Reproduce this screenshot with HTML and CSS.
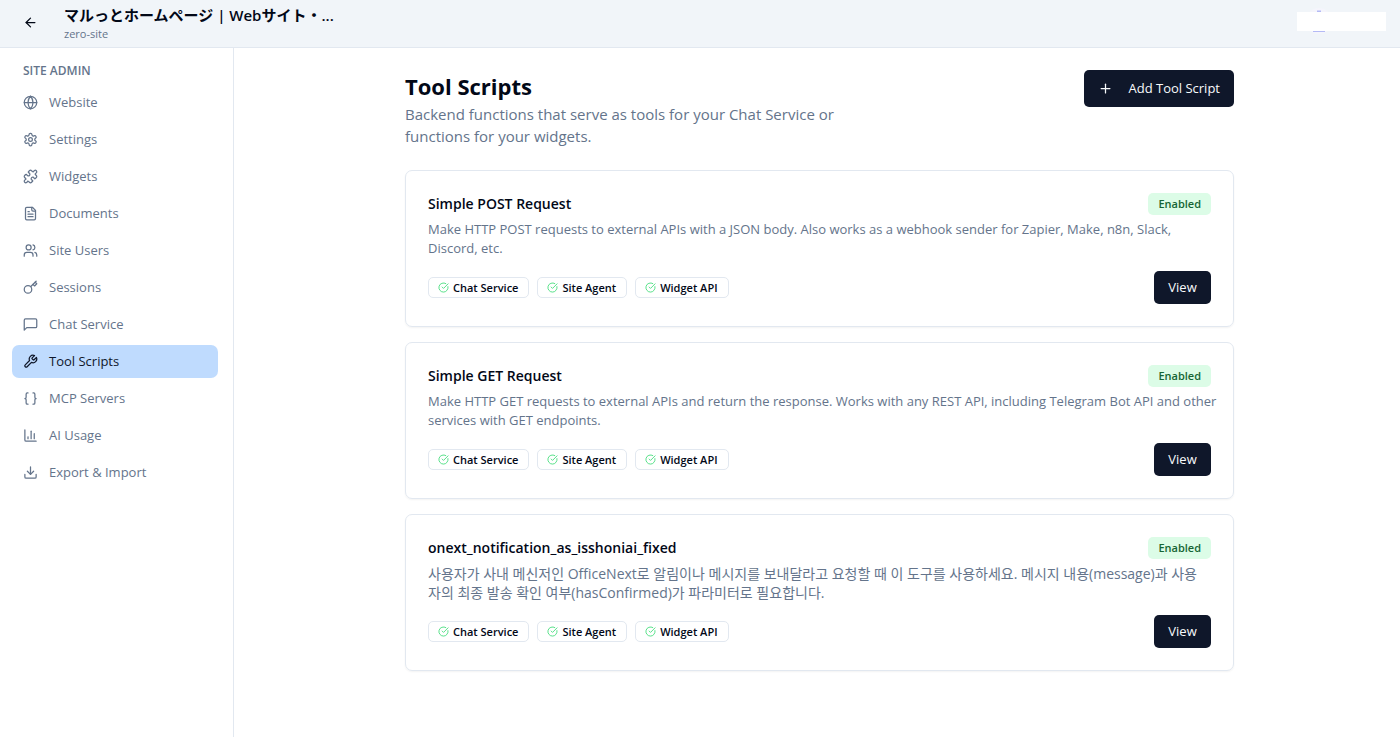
FILE: index.html
```
<!DOCTYPE html>
<html lang="en">
<head>
    <meta charset="UTF-8">
    <meta name="viewport" content="width=device-width, initial-scale=1.0">
    <title>Tool Scripts</title>
    <link rel="stylesheet" href="styles.css">
</head>
<body>
    <!-- Shared icon shapes -->
    <svg class="sprite" aria-hidden="true">
        <symbol id="icon-check" viewBox="0 0 24 24">
            <path d="M21.801 10A10 10 0 1 1 17 3.335"/>
            <path d="m9 11 3 3L22 4"/>
        </symbol>
    </svg>

    <header class="topbar">
        <button type="button" class="back-button" aria-label="Back">
            <svg class="icon" viewBox="0 0 24 24"><path d="m12 19-7-7 7-7"/><path d="M19 12H5"/></svg>
        </button>
        <div class="site-info">
            <p class="site-title" lang="ja">マルっとホームページ | Webサイト・...</p>
            <p class="site-slug">zero-site</p>
        </div>
        <div class="account">
            <svg class="avatar" viewBox="0 0 22 30" aria-hidden="true">
                <circle cx="11" cy="15" r="13" fill="#f5f5fc"/>
                <path d="M9 5.500h4M5 25h12" stroke="#b4baf5" stroke-width="2"/>
            </svg>
            <span class="account-name"></span>
        </div>
    </header>

    <div class="layout">
        <aside class="sidebar">
            <h2 class="sidebar-title">SITE ADMIN</h2>
            <nav class="nav">
                <a href="#" class="nav-item">
                    <svg class="icon" viewBox="0 0 24 24"><circle cx="12" cy="12" r="10"/><path d="M12 2a14.5 14.5 0 0 0 0 20 14.5 14.5 0 0 0 0-20"/><path d="M2 12h20"/></svg>
                    <span>Website</span>
                </a>
                <a href="#" class="nav-item">
                    <svg class="icon" viewBox="0 0 24 24"><path d="M12.220 2h-.44a2 2 0 0 0-2 2v.18a2 2 0 0 1-1 1.730l-.43.25a2 2 0 0 1-2 0l-.15-.08a2 2 0 0 0-2.730.73l-.22.38a2 2 0 0 0 .73 2.730l.15.1a2 2 0 0 1 1 1.720v.51a2 2 0 0 1-1 1.740l-.15.09a2 2 0 0 0-.73 2.730l.22.38a2 2 0 0 0 2.730.73l.15-.08a2 2 0 0 1 2 0l.43.25a2 2 0 0 1 1 1.730V20a2 2 0 0 0 2 2h.44a2 2 0 0 0 2-2v-.18a2 2 0 0 1 1-1.730l.43-.25a2 2 0 0 1 2 0l.15.08a2 2 0 0 0 2.730-.73l.22-.39a2 2 0 0 0-.73-2.730l-.15-.08a2 2 0 0 1-1-1.740v-.5a2 2 0 0 1 1-1.740l.15-.09a2 2 0 0 0 .73-2.730l-.22-.38a2 2 0 0 0-2.730-.73l-.15.08a2 2 0 0 1-2 0l-.43-.25a2 2 0 0 1-1-1.730V4a2 2 0 0 0-2-2z"/><circle cx="12" cy="12" r="3"/></svg>
                    <span>Settings</span>
                </a>
                <a href="#" class="nav-item">
                    <svg class="icon" viewBox="0 0 24 24"><path d="M19.439 7.850c-.049.322.059.648.289.878l1.568 1.568c.47.470.706 1.087.706 1.704s-.235 1.233-.706 1.704l-1.611 1.611a.98.98 0 0 1-.837.276c-.470-.070-.802-.480-.968-.925a2.501 2.501 0 1 0-3.214 3.214c.446.166.855.497.925.968a.979.979 0 0 1-.276.837l-1.610 1.610a2.404 2.404 0 0 1-1.705.707 2.402 2.402 0 0 1-1.704-.706l-1.568-1.568a1.026 1.026 0 0 0-.877-.290c-.493.074-.840.504-1.020.968a2.500 2.500 0 1 1-3.237-3.237c.464-.180.894-.527.967-1.020a1.026 1.026 0 0 0-.289-.877l-1.568-1.568A2.402 2.402 0 0 1 1.998 12c0-.617.236-1.234.706-1.704L4.230 8.770c.240-.240.581-.353.917-.303.515.077.877.528 1.073 1.010a2.500 2.500 0 1 0 3.259-3.259c-.482-.196-.933-.558-1.010-1.073-.050-.336.062-.676.303-.917l1.525-1.525A2.402 2.402 0 0 1 12 1.998c.617 0 1.234.236 1.704.706l1.568 1.568c.230.230.556.338.877.290.493-.074.840-.504 1.020-.968a2.500 2.500 0 1 1 3.237 3.237c-.464.180-.894.527-.967 1.020Z"/></svg>
                    <span>Widgets</span>
                </a>
                <a href="#" class="nav-item">
                    <svg class="icon" viewBox="0 0 24 24"><path d="M15 2H6a2 2 0 0 0-2 2v16a2 2 0 0 0 2 2h12a2 2 0 0 0 2-2V7Z"/><path d="M14 2v4a2 2 0 0 0 2 2h4"/><path d="M10 9H8"/><path d="M16 13H8"/><path d="M16 17H8"/></svg>
                    <span>Documents</span>
                </a>
                <a href="#" class="nav-item">
                    <svg class="icon" viewBox="0 0 24 24"><path d="M16 21v-2a4 4 0 0 0-4-4H6a4 4 0 0 0-4 4v2"/><circle cx="9" cy="7" r="4"/><path d="M22 21v-2a4 4 0 0 0-3-3.870"/><path d="M16 3.130a4 4 0 0 1 0 7.750"/></svg>
                    <span>Site Users</span>
                </a>
                <a href="#" class="nav-item">
                    <svg class="icon" viewBox="0 0 24 24"><circle cx="8" cy="15" r="6"/><path d="m12.500 10.500 8.500-8.500"/><path d="m16 7 2.500 2.500 3.500-3.500-2.500-2.500"/></svg>
                    <span>Sessions</span>
                </a>
                <a href="#" class="nav-item">
                    <svg class="icon" viewBox="0 0 24 24"><path d="M22 15a2 2 0 0 1-2 2H6l-4 4V5a2 2 0 0 1 2-2h16a2 2 0 0 1 2 2z"/></svg>
                    <span>Chat Service</span>
                </a>
                <a href="#" class="nav-item active" aria-current="page">
                    <svg class="icon" viewBox="0 0 24 24"><path d="M14.700 6.300a1 1 0 0 0 0 1.400l1.600 1.600a1 1 0 0 0 1.400 0l3.770-3.770a6 6 0 0 1-7.940 7.940l-6.910 6.910a2.120 2.120 0 0 1-3-3l6.910-6.910a6 6 0 0 1 7.940-7.940l-3.760 3.760z"/></svg>
                    <span>Tool Scripts</span>
                </a>
                <a href="#" class="nav-item">
                    <svg class="icon" viewBox="0 0 24 24"><path d="M8 3H7a2 2 0 0 0-2 2v5a2 2 0 0 1-2 2 2 2 0 0 1 2 2v5a2 2 0 0 0 2 2h1"/><path d="M16 21h1a2 2 0 0 0 2-2v-5a2 2 0 0 1 2-2 2 2 0 0 1-2-2V5a2 2 0 0 0-2-2h-1"/></svg>
                    <span>MCP Servers</span>
                </a>
                <a href="#" class="nav-item">
                    <svg class="icon" viewBox="0 0 24 24"><path d="M3 3v16a2 2 0 0 0 2 2h16"/><path d="M18 17V9"/><path d="M13 17V5"/><path d="M8 17v-3"/></svg>
                    <span>AI Usage</span>
                </a>
                <a href="#" class="nav-item">
                    <svg class="icon" viewBox="0 0 24 24"><path d="M21 15v4a2 2 0 0 1-2 2H5a2 2 0 0 1-2-2v-4"/><path d="m7 10 5 5 5-5"/><path d="M12 15V3"/></svg>
                    <span>Export &amp; Import</span>
                </a>
            </nav>
        </aside>

        <main class="main">
            <div class="content">
                <div class="page-header">
                    <div class="page-intro">
                        <h1>Tool Scripts</h1>
                        <p>Backend functions that serve as tools for your Chat Service or functions for your widgets.</p>
                    </div>
                    <button type="button" class="button add-button">
                        <svg class="icon" viewBox="0 0 24 24"><path d="M5 12h14"/><path d="M12 5v14"/></svg>
                        Add Tool Script
                    </button>
                </div>

                <div class="script-list">
                    <article class="card">
                        <div class="card-header">
                            <h3>Simple POST Request</h3>
                            <span class="status">Enabled</span>
                        </div>
                        <p class="description">Make HTTP POST requests to external APIs with a JSON body. Also works as a webhook sender for Zapier, Make, n8n, Slack, Discord, etc.</p>
                        <div class="card-footer">
                            <div class="tags">
                                <span class="tag"><svg class="icon"><use href="#icon-check"/></svg>Chat Service</span>
                                <span class="tag"><svg class="icon"><use href="#icon-check"/></svg>Site Agent</span>
                                <span class="tag"><svg class="icon"><use href="#icon-check"/></svg>Widget API</span>
                            </div>
                            <button type="button" class="button">View</button>
                        </div>
                    </article>

                    <article class="card">
                        <div class="card-header">
                            <h3>Simple GET Request</h3>
                            <span class="status">Enabled</span>
                        </div>
                        <p class="description">Make HTTP GET requests to external APIs and return the response. Works with any REST API, including Telegram Bot API and other services with GET endpoints.</p>
                        <div class="card-footer">
                            <div class="tags">
                                <span class="tag"><svg class="icon"><use href="#icon-check"/></svg>Chat Service</span>
                                <span class="tag"><svg class="icon"><use href="#icon-check"/></svg>Site Agent</span>
                                <span class="tag"><svg class="icon"><use href="#icon-check"/></svg>Widget API</span>
                            </div>
                            <button type="button" class="button">View</button>
                        </div>
                    </article>

                    <article class="card">
                        <div class="card-header">
                            <h3>onext_notification_as_isshoniai_fixed</h3>
                            <span class="status">Enabled</span>
                        </div>
                        <p class="description korean" lang="ko">사용자가 사내 메신저인 OfficeNext로 알림이나 메시지를 보내달라고 요청할 때 이 도구를 사용하세요. 메시지 내용(message)과 사용자의 최종 발송 확인 여부(hasConfirmed)가 파라미터로 필요합니다.</p>
                        <div class="card-footer">
                            <div class="tags">
                                <span class="tag"><svg class="icon"><use href="#icon-check"/></svg>Chat Service</span>
                                <span class="tag"><svg class="icon"><use href="#icon-check"/></svg>Site Agent</span>
                                <span class="tag"><svg class="icon"><use href="#icon-check"/></svg>Widget API</span>
                            </div>
                            <button type="button" class="button">View</button>
                        </div>
                    </article>
                </div>
            </div>
        </main>
    </div>
</body>
</html>
```
FILE: styles.css
```
* {
    margin: 0;
    padding: 0;
    box-sizing: border-box;
}

body {
    display: flex;
    flex-direction: column;
    min-height: 100vh;
    background-color: #fff;
    color: #020817;
    font-family: 'Open Sans', 'Noto Sans CJK KR', sans-serif;
    font-size: 13px;
    line-height: 19px;
}

button {
    font: inherit;
    cursor: pointer;
}

.sprite {
    display: none;
}

.icon {
    flex-shrink: 0;
    width: 15px;
    height: 15px;
    fill: none;
    stroke: currentColor;
    stroke-width: 2;
    stroke-linecap: round;
    stroke-linejoin: round;
}

/* Top bar */
.topbar {
    display: flex;
    align-items: center;
    height: 48px;
    padding: 0 14px 3px 15px;
    background-color: #f1f5f9;
    border-bottom: 1px solid #e2e8f0;
}

.back-button {
    display: flex;
    align-items: center;
    justify-content: center;
    width: 30px;
    height: 30px;
    border: none;
    background: none;
    color: #020817;
}

.site-info {
    flex: 1;
    min-width: 0;
    margin-left: 19px;
}

.site-title {
    font-family: 'Open Sans', 'Noto Sans CJK JP', sans-serif;
    font-size: 15px;
    font-weight: 600;
    line-height: 22px;
}

.site-slug {
    color: #64748b;
    font-size: 11px;
    line-height: 15px;
}

.account {
    display: grid;
    align-items: center;
    width: 89px;
    margin-bottom: 2px;
}

.avatar,
.account-name {
    grid-area: 1 / 1;
}

.avatar {
    width: 22px;
    height: 30px;
    margin-left: 11px;
}

.account-name {
    height: 19px;
    background-color: #fff;
}

/* Sidebar */
.layout {
    display: flex;
    flex: 1;
}

.sidebar {
    flex-shrink: 0;
    width: 234px;
    padding: 15px 15px 15px 12px;
    border-right: 1px solid #e2e8f0;
}

.sidebar-title {
    padding-left: 11px;
    margin-bottom: 7px;
    color: #64748b;
    font-size: 12px;
    font-weight: 600;
    line-height: 16px;
}

.nav {
    display: flex;
    flex-direction: column;
    gap: 4px;
}

.nav-item {
    display: flex;
    align-items: center;
    gap: 11px;
    height: 33px;
    padding: 0 11px;
    border-radius: 7px;
    color: #64748b;
    text-decoration: none;
}

.nav-item.active {
    background-color: #bfdbfe;
    color: #0f172a;
}

/* Page content */
.main {
    flex: 1;
    min-width: 0;
    padding: 22px 22px 22px 27px;
}

.content {
    max-width: 829px;
    margin: 0 auto;
}

.page-header {
    display: flex;
    align-items: flex-start;
    justify-content: space-between;
    margin-bottom: 23px;
}

.page-intro {
    max-width: 450px;
}

.page-intro h1 {
    font-size: 22px;
    font-weight: 700;
    line-height: 33px;
}

.page-intro p {
    color: #64748b;
    font-size: 15px;
    line-height: 22px;
}

.button {
    display: flex;
    align-items: center;
    justify-content: center;
    min-width: 57px;
    height: 33px;
    padding: 0 14px;
    border: none;
    border-radius: 5px;
    background-color: #0f172a;
    color: #f8fafc;
}

.add-button {
    gap: 15px;
    height: 37px;
}

.script-list {
    display: flex;
    flex-direction: column;
    gap: 15px;
}

.card {
    padding: 22px;
    border: 1px solid #e2e8f0;
    border-radius: 7px;
    box-shadow: 0 1px 2px rgba(0, 0, 0, 0.05);
}

.card-header,
.card-footer {
    display: flex;
    align-items: center;
    justify-content: space-between;
}

.card-header {
    margin-bottom: 5px;
}

.card-header h3 {
    font-size: 14px;
    font-weight: 600;
    line-height: 22px;
}

.status {
    padding: 0 10px;
    border-radius: 5px;
    background-color: #dcfce7;
    color: #166534;
    font-size: 11px;
    font-weight: 600;
    line-height: 22px;
}

/* Text may run slightly into the card's padding */
.description {
    margin: 0 -10px 13px 0;
    color: #64748b;
}

.description.korean {
    margin-right: 8px;
    font-size: 14px;
}

.tags {
    display: flex;
    gap: 8px;
}

.tag {
    display: flex;
    align-items: center;
    gap: 4px;
    padding: 0 10px 0 9px;
    border: 1px solid #e2e8f0;
    border-radius: 5px;
    font-size: 11px;
    font-weight: 600;
    line-height: 19px;
}

.tag .icon {
    width: 11px;
    height: 11px;
    color: #4ade80;
}
```
